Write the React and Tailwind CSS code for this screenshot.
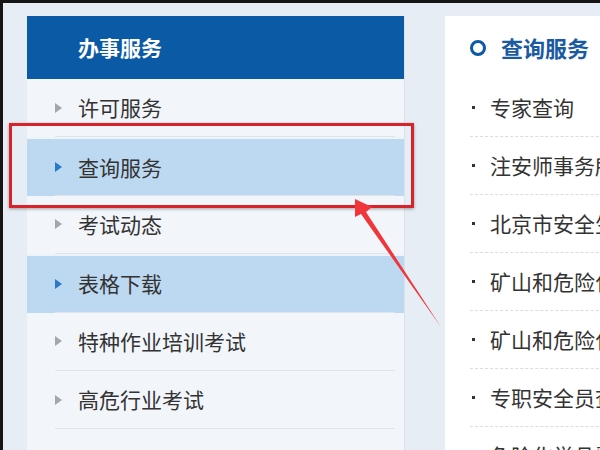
import React from 'react';

const menu = [
  { label: '许可服务' },
  { label: '查询服务', active: true },
  { label: '考试动态' },
  { label: '表格下载', active: true },
  { label: '特种作业培训考试' },
  { label: '高危行业考试' },
];

const links = [
  '专家查询',
  '注安师事务所查询',
  '北京市安全生产许可证查询',
  '矿山和危险化学品企业查询',
  '矿山和危险化学品人员查询',
  '专职安全员查询',
  '危险化学品登记查询',
];

const Triangle = ({ active }) => (
  <svg width="7" height="10" viewBox="0 0 7 10" className="shrink-0">
    <path d="M0 0 L7 5 L0 10 Z" fill={active ? '#2a78c8' : '#a3a6aa'} />
  </svg>
);

const App = () => {
  return (
    <div
      className="relative w-[600px] h-[450px] overflow-hidden bg-[#151515] pt-[3px] pl-[3px]"
      style={{ fontFamily: '"Noto Sans CJK SC", "Noto Sans", sans-serif' }}
    >
      <div className="flex h-full bg-[#e7edf4] pl-[24px] pt-[13px] gap-[40px]">
        {/* Left menu */}
        <div className="w-[378px] shrink-0 bg-[#f2f5f9] border-r border-[#dbe2ea]">
          <div className="h-[63px] bg-[#0b5aa5] flex items-center pl-[51px]">
            <span className="text-white text-[21px] font-bold">办事服务</span>
          </div>
          {menu.map((item) => (
            <div
              key={item.label}
              className={
                item.active
                  ? 'h-[58.4px] bg-[#bdd9f1] border-t-2 border-[#eef3f8] flex items-center pl-[28px]'
                  : 'h-[58.4px] flex items-center pl-[28px]'
              }
            >
              <div className="flex items-center gap-[16px] w-[340px] h-full border-b border-[#dfe4ea]">
                <Triangle active={item.active} />
                <span className="text-[21px] text-[#333] leading-none">{item.label}</span>
              </div>
            </div>
          ))}
        </div>

        {/* Right panel */}
        <div className="flex-1 bg-white overflow-hidden pl-[25px]">
          <div className="h-[63px] flex items-center gap-[15px]">
            <span className="w-[16px] h-[16px] rounded-full border-[3.5px] border-[#0b5aa5] shrink-0" />
            <span className="text-[22px] font-bold text-[#1a5aa3] whitespace-nowrap">查询服务</span>
          </div>
          {links.map((l) => (
            <div
              key={l}
              className="h-[58px] flex items-center gap-[15px] border-b border-dashed border-[#dcdcdc] whitespace-nowrap w-[400px]"
            >
              <span className="w-[3px] h-[3px] bg-[#333] shrink-0 ml-[2px]" />
              <span className="text-[21px] text-[#333] leading-none">{l}</span>
            </div>
          ))}
        </div>
      </div>

      {/* Annotation box */}
      <div className="absolute left-[9px] top-[123px] w-[405px] h-[85px] border-[3px] border-[#d8232a] shadow-[0_1px_3px_rgba(0,0,0,0.35)]" />

      {/* Annotation arrow */}
      <svg className="absolute left-0 top-0" width="600" height="450" viewBox="0 0 600 450">
        <polygon points="355,199 372,207 366,212 441,327 361,214 355,217" fill="#f0363a" />
      </svg>
    </div>
  );
};

export default App;
